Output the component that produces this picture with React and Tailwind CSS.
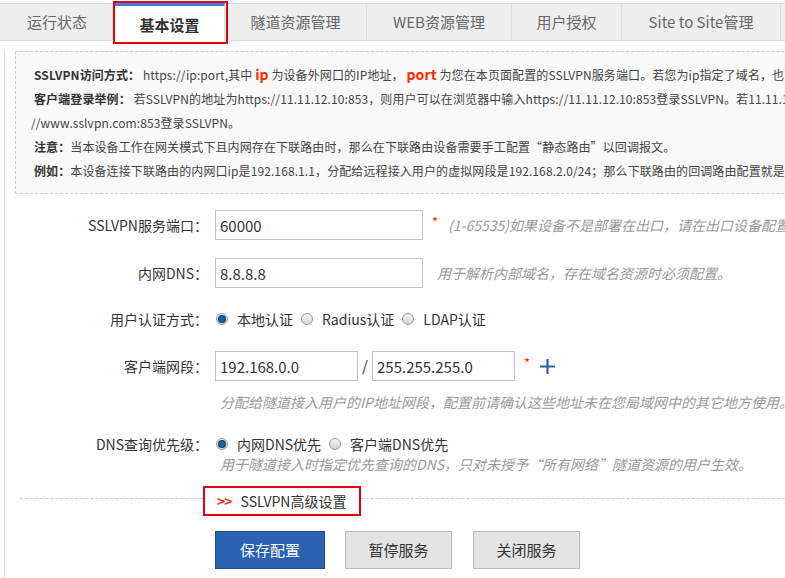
const TABS = [
  { label: '运行状态', w: 'w-[115px]' },
  { label: '基本设置', w: 'w-[110px]', active: true },
  { label: '隧道资源管理', w: 'w-[142px]' },
  { label: 'WEB资源管理', w: 'w-[145px]' },
  { label: '用户授权', w: 'w-[110px]' },
  { label: 'Site to Site管理', w: 'w-[159px]' },
  { label: '系统', w: 'w-[100px]' },
]

function Radio({ checked }) {
  return (
    <span className="w-[12px] h-[12px] rounded-full border border-[#9a9a9a] bg-gradient-to-b from-[#f6f6f6] to-[#d4d4d4] flex items-center justify-center shrink-0">
      {checked && <span className="w-[6px] h-[6px] rounded-full bg-[#1f5fa3] ring-1 ring-[#0d3a6b]" />}
    </span>
  )
}

function Label({ children }) {
  return <div className="w-[203px] shrink-0 text-right text-[14px] text-[#333] whitespace-nowrap">{children}</div>
}

function Hint({ children, className = '' }) {
  return <span className={`text-[14px] italic text-[#999] whitespace-nowrap ${className}`}>{children}</span>
}

function TextInput({ value, className = '' }) {
  return (
    <input
      readOnly
      value={value}
      className={`shrink-0 h-[30px] border border-[#c2c2c2] px-[4px] text-[15px] text-[#333] outline-none ${className}`}
    />
  )
}

export default function App() {
  return (
    <div
      className="w-[785px] h-[578px] overflow-hidden bg-white"
      style={{ fontFamily: '"Microsoft YaHei", "Noto Sans CJK SC", "Noto Sans", sans-serif' }}
    >
      {/* tab bar */}
      <div className="relative mt-[3px] h-[38px] w-[1000px] flex bg-[#eeeeee] border-t border-b border-[#dddddd]">
        {TABS.map(tab => (
          <div
            key={tab.label}
            className={
              tab.active
                ? `${tab.w} relative h-[38px] -mb-[1px] bg-white border-r border-[#dddddd] border-t-[3px] border-t-[#3d7fd6] -mt-[1px] flex items-center justify-center pt-[3px] text-[15px] font-bold text-[#333]`
                : `${tab.w} h-full border-r border-[#dddddd] flex items-center justify-center text-[15px] text-[#666]`
            }
          >
            {tab.label}
          </div>
        ))}
        <div className="absolute left-[113px] -top-[3px] w-[115px] h-[43px] border-2 border-[#e60012] pointer-events-none" />
      </div>

      {/* content */}
      <div className="ml-[4px] border-l border-[#dddddd] h-[540px]">
        <div className="ml-[10px] mt-[10px] w-[1000px] border border-dashed border-[#cccccc] bg-[#f9f9f9] pl-[18px] pt-[10px] pb-[10px] text-[12px] leading-[24px] text-[#444] whitespace-nowrap tracking-[0.1px]">
          <div>
            <b className="text-[#333]">SSLVPN访问方式：</b> https://ip:port,其中 <b className="text-[14px] text-[#ff2a00]">ip</b> 为设备外网口的IP地址， <b className="text-[14px] text-[#ff2a00]">port</b> 为您在本页面配置的SSLVPN服务端口。若您为ip指定了域名，也可以使用域名访问。
          </div>
          <div>
            <b className="text-[#333]">客户端登录举例：</b> 若SSLVPN的地址为https://11.11.12.10:853，则用户可以在浏览器中输入https://11.11.12.10:853登录SSLVPN。若11.11.12.10绑定了域名，则输入https:
          </div>
          <div className="-ml-[3px]">//www.sslvpn.com:853登录SSLVPN。</div>
          <div>
            <b className="text-[#333]">注意：</b>当本设备工作在网关模式下且内网存在下联路由时，那么在下联路由设备需要手工配置“静态路由”以回调报文。
          </div>
          <div>
            <b className="text-[#333]">例如：</b>本设备连接下联路由的内网口ip是192.168.1.1，分配给远程接入用户的虚拟网段是192.168.2.0/24；那么下联路由的回调路由配置就是192.168.2.0/24下一跳192.168.1.1。
          </div>
        </div>

        {/* form */}
        <div className="flex items-center mt-[16px] h-[30px]">
          <Label>SSLVPN服务端口：</Label>
          <TextInput value="60000" className="ml-[7px] w-[208px]" />
          <span className="ml-[9px] text-[13px] text-[#ff2a00] -mt-[6px]">*</span>
          <Hint className="ml-[10px]">(1-65535)如果设备不是部署在出口，请在出口设备配置端口映射。</Hint>
        </div>

        <div className="flex items-center mt-[18px] h-[30px]">
          <Label>内网DNS：</Label>
          <TextInput value="8.8.8.8" className="ml-[7px] w-[208px]" />
          <Hint className="ml-[14px]">用于解析内部域名，存在域名资源时必须配置。</Hint>
        </div>

        <div className="flex items-center mt-[21px] h-[20px]">
          <Label>用户认证方式：</Label>
          <div className="ml-[8px] flex items-center text-[14px] text-[#333] whitespace-nowrap">
            <Radio checked />
            <span className="ml-[9px]">本地认证</span>
            <span className="ml-[8px]"><Radio /></span>
            <span className="ml-[9px]">Radius认证</span>
            <span className="ml-[8px]"><Radio /></span>
            <span className="ml-[9px]">LDAP认证</span>
          </div>
        </div>

        <div className="flex items-center mt-[22px] h-[30px]">
          <Label>客户端网段：</Label>
          <TextInput value="192.168.0.0" className="ml-[7px] w-[143px]" />
          <span className="w-[14px] text-center text-[15px] text-[#333]">/</span>
          <TextInput value="255.255.255.0" className="w-[143px]" />
          <span className="ml-[9px] text-[13px] text-[#ff2a00] -mt-[6px]">*</span>
          <svg className="ml-[9px] shrink-0" width="17" height="17" viewBox="0 0 17 17">
            <path d="M8.5 1v15M1 8.5h15" stroke="#2a62b0" strokeWidth="2.2" fill="none" />
          </svg>
        </div>

        <div className="mt-[11px] h-[20px] flex items-center pl-[215px]">
          <Hint>分配给隧道接入用户的IP地址网段，配置前请确认这些地址未在您局域网中的其它地方使用。</Hint>
        </div>

        <div className="flex items-center mt-[22px] h-[20px]">
          <Label>DNS查询优先级：</Label>
          <div className="ml-[8px] flex items-center text-[14px] text-[#333] whitespace-nowrap">
            <Radio checked />
            <span className="ml-[9px]">内网DNS优先</span>
            <span className="ml-[8px]"><Radio /></span>
            <span className="ml-[9px]">客户端DNS优先</span>
          </div>
        </div>

        <div className="h-[20px] flex items-center pl-[215px]">
          <Hint>用于隧道接入时指定优先查询的DNS，只对未授予“所有网络”隧道资源的用户生效。</Hint>
        </div>

        <div className="mt-[24px] ml-[15px] border-t border-dashed border-[#cccccc]">
          <div className="-mt-[13px] ml-[183px] w-[158px] h-[30px] bg-white border-2 border-[#e60012] flex items-center pl-[12px] text-[14px] whitespace-nowrap">
            <span className="font-bold text-[#e8381f] tracking-[-1px]">&gt;&gt;</span>
            <span className="ml-[9px] text-[#333]">SSLVPN高级设置</span>
          </div>
        </div>

        <div className="mt-[15px] ml-[210px] flex gap-[20px]">
          <button className="w-[110px] h-[38px] bg-[#2a62b0] border border-[#1f4f94] text-white text-[15px]">保存配置</button>
          <button className="w-[107px] h-[38px] bg-[#e4e4e4] border border-[#bbbbbb] text-[#333] text-[15px]">暂停服务</button>
          <button className="ml-[1px] w-[107px] h-[38px] bg-[#e4e4e4] border border-[#bbbbbb] text-[#333] text-[15px]">关闭服务</button>
        </div>
      </div>
    </div>
  )
}
